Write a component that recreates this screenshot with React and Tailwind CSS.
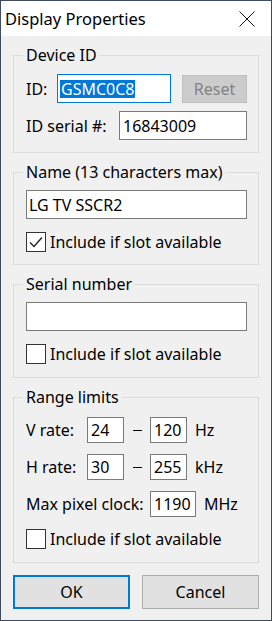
import React from 'react';

const font = { fontFamily: '"Noto Sans", "Liberation Sans", sans-serif' };

const Group = ({ title, children, className = '' }) => (
    <fieldset className={`border border-[#dcdcdc] pl-3 pr-[11px] ${className}`}>
        <legend className="ml-[-3px] px-[3px] leading-[20px]">{title}</legend>
        {children}
    </fieldset>
);

const CheckRow = ({ checked, className = '' }) => (
    <div className={`flex items-center h-[20px] ${className}`}>
        <div className="w-[20px] h-[20px] border border-[#333333] bg-white flex items-center justify-center shrink-0">
            {checked && (
                <svg width="14" height="12" viewBox="0 0 14 12">
                    <path d="M1 6.5 L5 10.5 L13 1.5" fill="none" stroke="#222" strokeWidth="1.4" />
                </svg>
            )}
        </div>
        <span className="ml-[4px] leading-[20px]">Include if slot available</span>
    </div>
);

const SmallBox = ({ value, w = 'w-[37px]' }) => (
    <div className={`${w} h-[26px] border border-[#7a7a7a] bg-white flex items-center pl-[3px] leading-none`}>
        {value}
    </div>
);

const Dash = () => (
    <span className="w-[26px] flex justify-center">
        <span className="w-[9px] h-[1px] bg-black" />
    </span>
);

const App = () => {
    return (
        <div className="w-[272px] h-[621px] border border-[#3d4b5c] bg-[#f0f0f0] flex flex-col text-[16px] text-black" style={font}>
            {/* Title bar */}
            <div className="h-[35px] bg-white flex items-center justify-between pl-[4px] pr-[16px] shrink-0">
                <span className="text-[16.5px] mt-[1px]">Display Properties</span>
                <svg width="16" height="16" viewBox="0 0 16 16">
                    <path d="M0.5 0.5 L15.5 15.5 M15.5 0.5 L0.5 15.5" stroke="#111" strokeWidth="1" />
                </svg>
            </div>

            <div className="flex flex-col px-3">
                <Group title="Device ID" className="mt-[9px] pb-[12px]">
                    <div className="flex items-center mt-[9px]">
                        <span className="w-[31px]">ID:</span>
                        <div className="w-[114px] h-[29px] border border-[#0078d7] bg-white flex items-center pl-[2px]">
                            <span className="bg-[#0078d7] text-white px-[1px] leading-[18px]">GSMC0C8</span>
                        </div>
                        <div className="ml-[11px] w-[65px] h-[28px] border border-[#bfbfbf] bg-[#cccccc] text-[#838383] flex items-center justify-center">
                            Reset
                        </div>
                    </div>
                    <div className="flex items-center mt-[8px]">
                        <span className="w-[93px]">ID serial #:</span>
                        <div className="flex-1 h-[29px] border border-[#7a7a7a] bg-white flex items-center pl-[3px]">16843009</div>
                    </div>
                </Group>

                <Group title="Name (13 characters max)" className="mt-[9px] pb-[12px]">
                    <div className="mt-[8px] h-[29px] border border-[#7a7a7a] bg-white flex items-center pl-[2px]">LG TV SSCR2</div>
                    <CheckRow checked className="mt-[13px]" />
                </Group>

                <Group title="Serial number" className="mt-[9px] pb-[13px]">
                    <div className="mt-[8px] h-[29px] border border-[#7a7a7a] bg-white" />
                    <CheckRow className="mt-[13px]" />
                </Group>

                <Group title="Range limits" className="mt-[9px] pb-[13px]">
                    <div className="flex items-center mt-[10px]">
                        <span className="w-[61px]">V rate:</span>
                        <SmallBox value="24" />
                        <Dash />
                        <SmallBox value="120" />
                        <span className="ml-[8px]">Hz</span>
                    </div>
                    <div className="flex items-center mt-[11px]">
                        <span className="w-[61px]">H rate:</span>
                        <SmallBox value="30" />
                        <Dash />
                        <SmallBox value="255" />
                        <span className="ml-[8px]">kHz</span>
                    </div>
                    <div className="flex items-center mt-[11px]">
                        <span className="w-[124px]">Max pixel clock:</span>
                        <SmallBox value="1190" w="w-[46px]" />
                        <span className="ml-[8px]">MHz</span>
                    </div>
                    <CheckRow className="mt-[12px]" />
                </Group>

                <div className="flex justify-between mt-[12px]">
                    <button className="w-[117px] h-[34px] border-2 border-[#0078d7] bg-[#e1e1e1]">OK</button>
                    <button className="w-[117px] h-[34px] border border-[#adadad] bg-[#e1e1e1]">Cancel</button>
                </div>
            </div>
        </div>
    );
};

export default App;
